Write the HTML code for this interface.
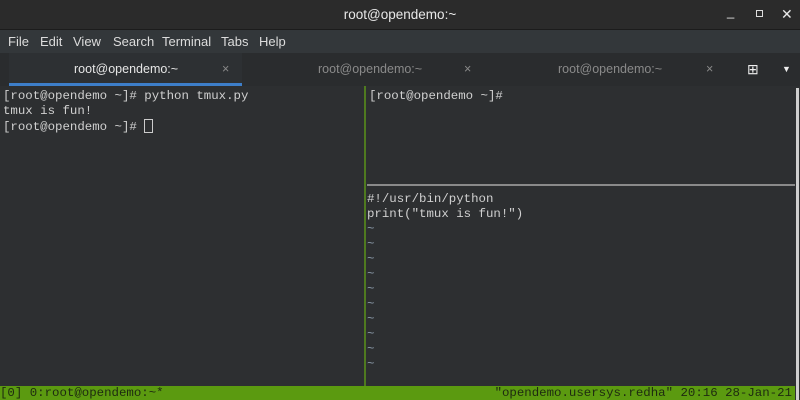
<!DOCTYPE html>
<html><head><style>
body{margin:0;width:800px;height:400px;overflow:hidden;background:#2d2f31;font-family:"Liberation Sans",sans-serif;position:relative}
.t{position:absolute;left:0;top:0;width:800px;height:29px;background:#2b2b2b;border-bottom:1px solid #1c1c1c;color:#e8e8e8;font-size:13.5px;text-align:center;line-height:29px}
.m{position:absolute;left:0;top:30px;width:800px;height:23px;background:#33373a;color:#dcdcdc;font-size:13px;line-height:23px}
.m span{position:absolute}
.tb{position:absolute;left:0;top:53px;width:800px;height:33px;background:#2a2c2e;font-size:12.5px;line-height:33px}
.tab{position:absolute;top:0;height:33px;color:#8a8a8a}
.mono{font-family:"Liberation Mono",monospace;font-size:12.4px;line-height:15px;color:#d0d0d0;position:absolute;white-space:pre}
</style></head><body>
<div class="t">root@opendemo:~
<span style="position:absolute;left:727px;top:-3px;font-size:13px">_</span>
<span style="position:absolute;left:756px;top:10px;width:7px;height:7px;border:1.5px solid #ddd;box-sizing:border-box"></span>
<span style="position:absolute;left:781px;top:0;font-size:14px">✕</span></div>
<div class="m"><span style="left:8px">File</span><span style="left:40px">Edit</span><span style="left:73px">View</span><span style="left:113px">Search</span><span style="left:162px">Terminal</span><span style="left:221px">Tabs</span><span style="left:259px">Help</span></div>
<div class="tb">
<div class="tab" style="left:9px;width:233px;background:#2d3033;color:#e6e6e6;border-bottom:3px solid #3d7ec9;box-sizing:border-box"><span style="position:absolute;left:65px">root@opendemo:~</span><span style="position:absolute;left:213px;color:#888">×</span></div>
<div class="tab" style="left:318px">root@opendemo:~</div><div class="tab" style="left:464px">×</div>
<div class="tab" style="left:558px">root@opendemo:~</div><div class="tab" style="left:706px">×</div>
<div class="tab" style="left:747px;color:#eee;font-size:14px">⊞</div>
<div class="tab" style="left:782px;color:#eee;font-size:9px">▼</div>
</div>
<div class="mono" style="left:3px;top:89px">[root@opendemo ~]# python tmux.py
tmux is fun!
[root@opendemo ~]# <span style="display:inline-block;width:9px;height:14px;border:1px solid #ccc;box-sizing:border-box;vertical-align:-3px"></span></div>
<div style="position:absolute;left:364px;top:86px;width:2px;height:300px;background:#4f7a1f"></div>
<div style="position:absolute;left:367px;top:184px;width:428px;height:2px;background:#8a8a8a"></div>
<div style="position:absolute;left:796px;top:88px;width:3px;height:312px;background:#cfcfcf"></div>
<div class="mono" style="left:369px;top:89px">[root@opendemo ~]#</div>
<div class="mono" style="left:367px;top:192px">#!/usr/bin/python
print("tmux is fun!")
<span style="color:#8a9aa8">~
~
~
~
~
~
~
~
~
~</span></div>
<div class="mono" style="left:0;top:386px;width:795px;height:14px;line-height:14px;background:#5b9a10;color:#1e2a10">[0] 0:root@opendemo:~*<span style="position:absolute;right:3px">"opendemo.usersys.redha" 20:16 28-Jan-21</span></div>
</body></html>
